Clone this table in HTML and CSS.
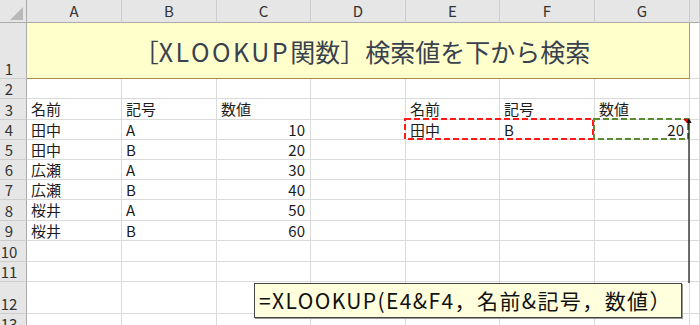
FILE: index.html
```html
<html>
  <head>
    <title>XLOOKUP 下から検索</title>
    <link rel="stylesheet" href="styles.css">
  </head>
  <body>
    <div class="sheet">
      <!-- intestazione colonne -->
      <div class="corner"><span class="corner-mark"></span></div>
      <div class="col-head">A</div><div class="col-head">B</div><div class="col-head">C</div><div class="col-head">D</div>
      <div class="col-head">E</div><div class="col-head">F</div><div class="col-head">G</div><div class="col-head"></div>

      <!-- riga 1: titolo unito A1:G1 -->
      <div class="row-head">1</div>
      <div class="title">［<span class="latin">XLOOKUP</span>関数］検索値を下から検索</div>
      <div class="cell"></div>

      <div class="row-head">2</div>
      <div class="cell"></div><div class="cell"></div><div class="cell"></div><div class="cell"></div>
      <div class="cell"></div><div class="cell"></div><div class="cell"></div><div class="cell"></div>

      <div class="row-head">3</div>
      <div class="cell">名前</div><div class="cell">記号</div><div class="cell">数値</div><div class="cell"></div>
      <div class="cell">名前</div><div class="cell">記号</div><div class="cell">数値</div><div class="cell"></div>

      <div class="row-head">4</div>
      <div class="cell">田中</div><div class="cell">A</div><div class="cell num">10</div><div class="cell"></div>
      <div class="cell">田中
        <!-- bordo tratteggiato E4:F4 -->
        <svg class="marquee" width="190" height="22"><rect x="1" y="1" width="188" height="20" fill="none" stroke="#ff1a1a" stroke-width="2" stroke-dasharray="6 3"/></svg>
      </div>
      <div class="cell">B</div>
      <div class="cell num comment">20
        <svg class="marquee" width="96" height="22"><rect x="1" y="1" width="94" height="20" fill="none" stroke="#5a8a34" stroke-width="2" stroke-dasharray="6 3"/></svg>
      </div>
      <div class="cell"></div>

      <div class="row-head">5</div>
      <div class="cell">田中</div><div class="cell">B</div><div class="cell num">20</div><div class="cell"></div>
      <div class="cell"></div><div class="cell"></div><div class="cell"></div><div class="cell"></div>

      <div class="row-head">6</div>
      <div class="cell">広瀬</div><div class="cell">A</div><div class="cell num">30</div><div class="cell"></div>
      <div class="cell"></div><div class="cell"></div><div class="cell"></div><div class="cell"></div>

      <div class="row-head">7</div>
      <div class="cell">広瀬</div><div class="cell">B</div><div class="cell num">40</div><div class="cell"></div>
      <div class="cell"></div><div class="cell"></div><div class="cell"></div><div class="cell"></div>

      <div class="row-head">8</div>
      <div class="cell">桜井</div><div class="cell">A</div><div class="cell num">50</div><div class="cell"></div>
      <div class="cell"></div><div class="cell"></div><div class="cell"></div><div class="cell"></div>

      <div class="row-head">9</div>
      <div class="cell">桜井</div><div class="cell">B</div><div class="cell num">60</div><div class="cell"></div>
      <div class="cell"></div><div class="cell"></div><div class="cell"></div><div class="cell"></div>

      <div class="row-head">10</div>
      <div class="cell"></div><div class="cell"></div><div class="cell"></div><div class="cell"></div>
      <div class="cell"></div><div class="cell"></div><div class="cell"></div><div class="cell"></div>

      <div class="row-head">11</div>
      <div class="cell"></div><div class="cell"></div><div class="cell"></div><div class="cell"></div>
      <div class="cell"></div><div class="cell"></div><div class="cell"></div><div class="cell"></div>

      <div class="row-head">12</div>
      <div class="cell"></div><div class="cell"></div><div class="cell"></div><div class="cell"></div>
      <div class="cell"></div><div class="cell"></div><div class="cell"></div><div class="cell"></div>

      <div class="row-head">13</div>
      <div class="cell"></div><div class="cell"></div><div class="cell"></div><div class="cell"></div>
      <div class="cell"></div><div class="cell"></div><div class="cell"></div><div class="cell"></div>

      <!-- forme sopra il foglio: freccia e casella di testo -->
      <svg class="arrow" width="10" height="168">
        <line x1="5" y1="3" x2="5" y2="166" stroke="#111" stroke-width="1.2"/>
        <path d="M2.5 6 L5 1 L7.5 6 Z" fill="#111"/>
      </svg>
      <div class="formula">=XLOOKUP(E4&amp;F4，名前&amp;記号，数値）</div>
    </div>
  </body>
</html>
```

FILE: styles.css
```css
body {
  margin: 0;
  background: #fff;
  overflow: hidden;
}

.sheet {
  position: relative;
  display: grid;
  grid-template-columns: 27px 95px 95px 94px 95px 94px 95px 95px 1fr;
  grid-template-rows: 23px 56px 20px 21px 20px 20px 20px 20px 21px 20px 21px 20px 32px 20px;
  width: 700px;
  height: 325px;
  overflow: hidden;
  font-family: "Noto Sans CJK JP", "Noto Sans", sans-serif;
  font-size: 15px;
  color: #1c1c1c;
}

.corner {
  position: relative;
  background: #e6e6e6;
  border-right: 1px solid #ababab;
  border-bottom: 1px solid #ababab;
  box-sizing: border-box;
}

.corner-mark {
  position: absolute;
  right: 3px;
  bottom: 2px;
  width: 0;
  height: 0;
  border-left: 13px solid transparent;
  border-bottom: 13px solid #b9b9b9;
}

.col-head {
  background: #e6e6e6;
  border-right: 1px solid #cdcdcd;
  border-bottom: 1px solid #ababab;
  box-sizing: border-box;
  text-align: center;
  line-height: 22px;
  color: #333;
}

.row-head {
  display: flex;
  align-items: flex-end;
  justify-content: center;
  padding-right: 8px;
  background: #e6e6e6;
  border-right: 1px solid #ababab;
  border-bottom: 1px solid #cdcdcd;
  box-sizing: border-box;
  line-height: 19px;
  color: #333;
}

.cell {
  position: relative;
  border-right: 1px solid #dadada;
  border-bottom: 1px solid #dadada;
  box-sizing: border-box;
  padding: 0 4px;
  line-height: 19px;
  white-space: nowrap;
}

.cell.num {
  text-align: right;
  padding-right: 5px;
}

/* indicatore del commento nella cella */
.cell.comment::after {
  content: "";
  position: absolute;
  top: -1px;
  right: 0;
  border-left: 6px solid transparent;
  border-top: 6px solid #e00000;
  z-index: 2;
}

/* bordo tratteggiato sopra le celle */
.marquee {
  position: absolute;
  top: -2px;
  left: -2px;
  z-index: 1;
}

.title {
  grid-column: 2 / 9;
  display: flex;
  align-items: center;
  justify-content: center;
  padding-left: 8px;
  background: #ffffcc;
  border-right: 1px solid #b99b45;
  border-bottom: 1px solid #a8904a;
  box-sizing: border-box;
  font-size: 25px;
  color: #39414e;
  white-space: nowrap;
}

.title .latin {
  letter-spacing: 2.5px;
}

.arrow {
  position: absolute;
  left: 684px;
  top: 117px;
  z-index: 3;
}

.formula {
  position: absolute;
  left: 254px;
  top: 283px;
  width: 428px;
  height: 35px;
  box-sizing: border-box;
  padding-left: 4px;
  background: #ffffde;
  border: 1px solid #444;
  box-shadow: 1px 1px 0 #999;
  font-size: 21px;
  letter-spacing: 1.4px;
  line-height: 33px;
  color: #111;
  white-space: nowrap;
  z-index: 3;
}
```
